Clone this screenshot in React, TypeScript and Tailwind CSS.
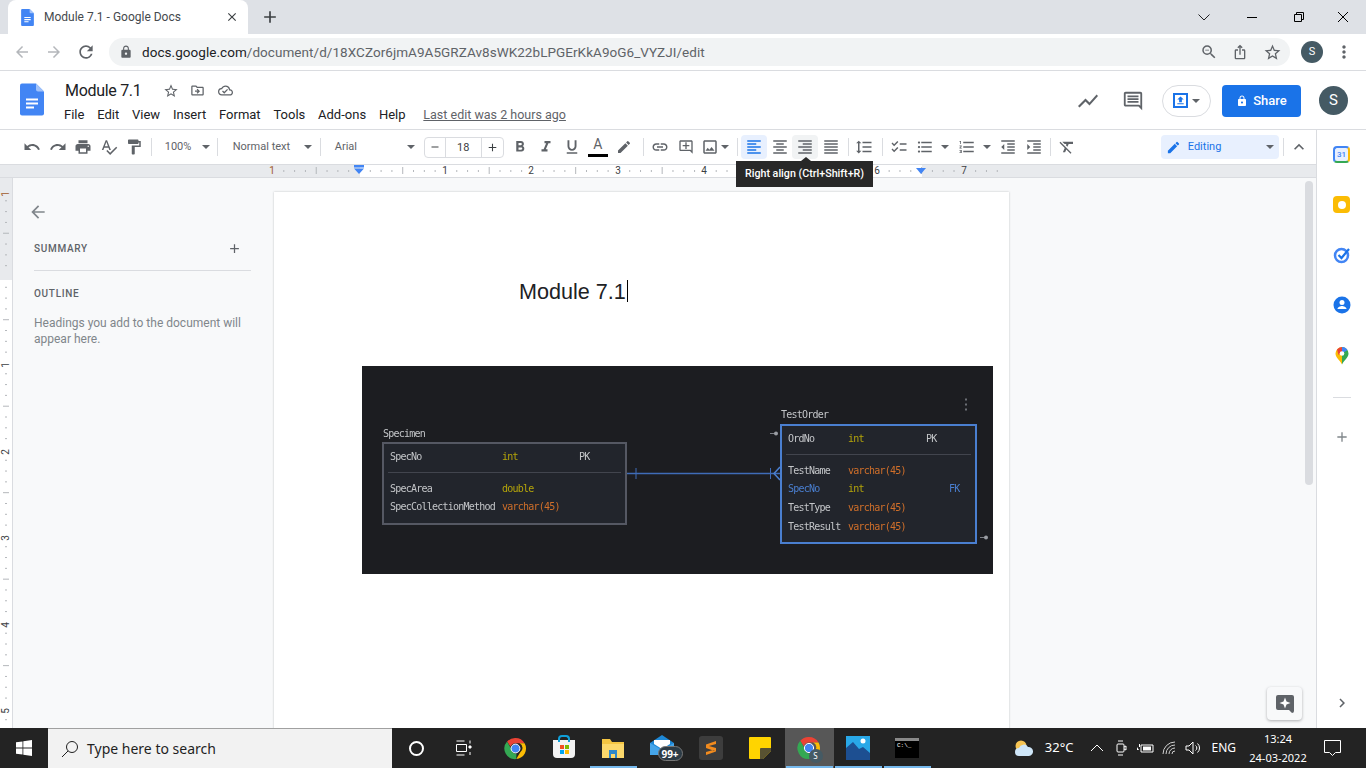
import type { ReactNode } from 'react';
import {
  MdUndo, MdRedo, MdPrint, MdSpellcheck, MdFormatPaint, MdFormatBold, MdFormatItalic, MdFormatUnderlined,
  MdLink, MdOutlineAddComment, MdOutlineImage, MdFormatAlignLeft, MdFormatAlignCenter, MdFormatAlignRight,
  MdFormatAlignJustify, MdFormatLineSpacing, MdChecklist, MdFormatListBulleted, MdFormatListNumbered,
  MdFormatIndentDecrease, MdFormatIndentIncrease, MdFormatClear, MdEdit, MdExpandLess, MdMoreVert, MdArrowBack,
  MdAdd, MdShowChart, MdOutlineInsertComment, MdLock, MdStarBorder, MdOutlineDriveFileMove, MdOutlineCloudDone,
  MdRefresh, MdArrowForward, MdClose, MdZoomOut, MdIosShare, MdChevronRight, MdRemove, MdFileUpload,
} from 'react-icons/md';

function Sep({ className = '' }: { className?: string }) {
  return <div className={`h-[18px] w-px shrink-0 bg-[#dadce0] ${className}`} />;
}

function Caret({ className = '' }: { className?: string }) {
  return <div className={`h-0 w-0 shrink-0 border-x-[4px] border-t-[4px] border-x-transparent border-t-[#5f6368] ${className}`} />;
}

function DocIcon({ w, h }: { w: number; h: number }) {
  return (
    <svg width={w} height={h} viewBox="0 0 24 32">
      <path d="M2 0h14l8 8v22a2 2 0 0 1-2 2H2a2 2 0 0 1-2-2V2a2 2 0 0 1 2-2z" fill="#4285f4" />
      <path d="M16 0l8 8h-6a2 2 0 0 1-2-2z" fill="#a1c2fa" />
      <path d="M6 15h12v2H6zM6 19h12v2H6zM6 23h8v2H6z" fill="#fff" />
    </svg>
  );
}

function ChromeLogo({ size }: { size: number }) {
  return (
    <svg width={size} height={size} viewBox="0 0 24 24">
      <path d="M12 1a11 11 0 0 1 9.5 5.5H12a5.5 5.5 0 0 0-5.2 3.8L3.2 4.8A11 11 0 0 1 12 1z" fill="#ea4335" />
      <path d="M21.5 6.5A11 11 0 0 1 12.8 23l4-6.9a5.5 5.5 0 0 0-.6-9.6z" fill="#fbbc04" />
      <path d="M3.2 4.8l4.4 7.6A5.5 5.5 0 0 0 13 17.4l-.2 5.6A11 11 0 0 1 3.2 4.8z" fill="#34a853" />
      <circle cx="12" cy="12" r="4.6" fill="#4285f4" stroke="#fff" strokeWidth="1" />
    </svg>
  );
}

const inchMarks = [
  { x: 272, label: '1' },
  { x: 445, label: '1' },
  { x: 531, label: '2' },
  { x: 618, label: '3' },
  { x: 704, label: '4' },
  { x: 877, label: '6' },
  { x: 964, label: '7' },
];

function HorizontalRuler() {
  // tick every eighth of an inch, longer at the half inch
  const ticks: { x: number; long: boolean }[] = [];
  for (let i = 0; i < 68; i++) {
    const x = 273 + i * 10.81;
    if (i % 8 === 0) continue;
    ticks.push({ x, long: i % 4 === 0 });
  }
  return (
    <div className="relative h-[13px] shrink-0 border-b border-[#dadce0] bg-[#e8eaed]">
      <div className="absolute left-[360px] top-0 h-[12px] w-[562px] bg-white" />
      <svg className="absolute inset-0" width="1316" height="12">
        {ticks.map((t) => (
          <line key={t.x} x1={t.x} x2={t.x} y1={t.long ? 2 : 5} y2={t.long ? 9 : 7} stroke="#b4b7bb" strokeWidth="1" />
        ))}
        <path d="M354 0h10v2.5h-10zM354 3.5h10l-5 5.5z" fill="#4285f4" />
        <path d="M916 3h10l-5 6z" fill="#4285f4" />
      </svg>
      {inchMarks.map((m, i) => (
        <span
          key={i}
          style={{ left: m.x - 4 }}
          className={`absolute top-0 w-2 text-center text-[10px] leading-[12px] ${i === 0 ? 'text-[#a05a2c]' : 'text-[#3c4043]'}`}
        >
          {m.label}
        </span>
      ))}
    </div>
  );
}

function VerticalRuler() {
  const ticks: { y: number; long: boolean }[] = [];
  for (let i = 0; i < 52; i++) {
    const y = 12 + i * 10.81;
    if (i % 8 === 0) continue;
    ticks.push({ y, long: i % 4 === 0 });
  }
  const labels = [
    { y: 16, text: '1', brown: true },
    { y: 187, text: '1' },
    { y: 274, text: '2' },
    { y: 360, text: '3' },
    { y: 447, text: '4' },
    { y: 533, text: '5' },
  ];
  return (
    <div className="relative w-[13px] shrink-0 border-r border-[#dadce0] bg-white">
      <div className="h-[102px] bg-[#e8eaed]" />
      <svg className="absolute inset-0" width="12" height="550">
        {ticks.map((t) => (
          <line key={t.y} y1={t.y} y2={t.y} x1={t.long ? 3 : 5} x2={t.long ? 9 : 7} stroke="#b4b7bb" strokeWidth="1" />
        ))}
      </svg>
      {labels.map((l) => (
        <span
          key={l.y}
          style={{ top: l.y - 6 }}
          className={`absolute left-0 w-3 -rotate-90 text-center text-[10px] leading-[12px] ${l.brown ? 'text-[#a05a2c]' : 'text-[#3c4043]'}`}
        >
          {l.text}
        </span>
      ))}
    </div>
  );
}

type Cell = { name: string; type: string; key?: string };

const typeColor = (t: string) => (t === 'int' || t === 'double' ? 'text-[#b5a50a]' : 'text-[#d06f2a]');

function TableRow({ row, nameW, typeW }: { row: Cell; nameW: string; typeW: string }) {
  return (
    <div className="flex h-[18.7px] items-center">
      <span className={`${nameW} text-[#c4c6c9]`}>{row.name}</span>
      <span className={`${typeW} ${typeColor(row.type)}`}>{row.type}</span>
      <span className="text-[#c4c6c9]">{row.key}</span>
    </div>
  );
}

function ErDiagram() {
  const mono = "font-['DejaVu_Sans_Mono',monospace] text-[10px] tracking-[-0.77px]";
  return (
    <div className={`relative h-[208px] w-[631px] bg-[#1c1d21] blur-[0.4px] ${mono}`}>
      <span className="absolute left-[21px] top-[60px] text-[#c4c6c9]">Specimen</span>
      <div className="absolute left-[20px] top-[76px] h-[83px] w-[245px] border-2 border-[#555863] bg-[#22252c] pl-[6px] pr-[4px] pt-[3px]">
        <TableRow row={{ name: 'SpecNo', type: 'int', key: 'PK' }} nameW="w-[112px]" typeW="w-[77px]" />
        <div className="my-[6px] ml-[-2px] h-px bg-[#42454e]" />
        <TableRow row={{ name: 'SpecArea', type: 'double' }} nameW="w-[112px]" typeW="w-[77px]" />
        <TableRow row={{ name: 'SpecCollectionMethod', type: 'varchar(45)' }} nameW="w-[112px]" typeW="w-[77px]" />
      </div>

      <span className="absolute left-[419px] top-[41px] text-[#c4c6c9]">TestOrder</span>
      <div className="absolute left-[418px] top-[58px] h-[120px] w-[197px] border-2 border-[#4a7fd0] bg-[#22252c] pl-[6px] pr-[4px] pt-[3px]">
        <TableRow row={{ name: 'OrdNo', type: 'int', key: 'PK' }} nameW="w-[60px]" typeW="w-[78px]" />
        <div className="my-[6px] ml-[-2px] h-px bg-[#42454e]" />
        <TableRow row={{ name: 'TestName', type: 'varchar(45)' }} nameW="w-[60px]" typeW="w-[78px]" />
        <div className="flex h-[18.7px] items-center">
          <span className="w-[60px] text-[#4a7fd0]">SpecNo</span>
          <span className="w-[101px] text-[#b5a50a]">int</span>
          <span className="text-[#4a7fd0]">FK</span>
        </div>
        <TableRow row={{ name: 'TestType', type: 'varchar(45)' }} nameW="w-[60px]" typeW="w-[78px]" />
        <TableRow row={{ name: 'TestResult', type: 'varchar(45)' }} nameW="w-[60px]" typeW="w-[78px]" />
      </div>

      <svg className="absolute inset-0" width="631" height="208">
        <path d="M265 107.5h153" stroke="#3f6cb8" strokeWidth="1.5" fill="none" />
        <path d="M274 102v11M408.5 102v11" stroke="#3f6cb8" strokeWidth="1" />
        <path d="M418 101l-6 6.5l6 6.5" stroke="#4a7fd0" strokeWidth="1.5" fill="none" />
        <path d="M408 67.5h6M618 171.5h6" stroke="#7d8087" strokeWidth="1" />
        <circle cx="414" cy="67.5" r="2" fill="#9a9da3" />
        <circle cx="624" cy="171.5" r="2" fill="#9a9da3" />
        <path d="M604 32.5v2M604 37.5v2M604 42.5v2" stroke="#6b6e75" strokeWidth="2" />
      </svg>
    </div>
  );
}

function TabStrip() {
  return (
    <div className="flex h-[34px] shrink-0 items-end bg-[#dee1e6]">
      <div className="ml-[8px] flex h-[34px] w-[240px] items-center rounded-t-lg bg-white pl-[12px] pr-[9px]">
        <DocIcon w={15} h={17} />
        <span className="ml-[9px] flex-1 whitespace-nowrap text-[12px] text-[#45494d]">Module 7.1 - Google Docs</span>
        <MdClose size={14} className="text-[#3c4043]" />
      </div>
      <div className="ml-[12px] flex h-[34px] items-center">
        <MdAdd size={20} className="text-[#3c4043]" />
      </div>
      <div className="ml-auto flex h-[34px] items-center text-[#202124]">
        <svg width="12" height="7" viewBox="0 0 12 7" className="mr-[37px]">
          <path d="M.5.5L6 6l5.5-5.5" fill="none" stroke="#202124" />
        </svg>
        <div className="mr-[37px] h-px w-2.5 bg-black" />
        <svg width="10" height="10" viewBox="0 0 10 10" className="mr-[33px]">
          <path d="M.5 2.5h7v7h-7zM2.5 2.5v-2h7v7h-2" fill="none" stroke="#000" />
        </svg>
        <svg width="12" height="12" viewBox="0 0 12 12" className="mr-[17px]">
          <path d="M1 1l10 10M11 1L1 11" stroke="#000" />
        </svg>
      </div>
    </div>
  );
}

function AddressBar() {
  return (
    <div className="flex h-[37px] shrink-0 items-center border-b border-[#dadce0] bg-white">
      <MdArrowBack size={18} className="ml-[13px] text-[#b4b7bb]" />
      <MdArrowForward size={18} className="ml-[14px] text-[#b4b7bb]" />
      <MdRefresh size={20} className="ml-[13px] text-[#5f6368]" />
      <div className="ml-[13px] flex h-[28px] w-[1181px] items-center rounded-full bg-[#f1f3f4] pl-[10px] pr-[8px]">
        <MdLock size={14} className="text-[#5f6368]" />
        <span className="ml-[9px] whitespace-nowrap text-[13.5px] tracking-[0.05px] text-[#5f6368]">
          <span className="text-[#202124]">docs.google.com</span>/document/d/18XCZor6jmA9A5GRZAv8sWK22bLPGErKkA9oG6_VYZJI/edit
        </span>
        <MdZoomOut size={18} className="ml-auto text-[#5f6368]" />
        <MdIosShare size={16} className="ml-[14px] text-[#5f6368]" />
        <MdStarBorder size={19} className="ml-[15px] text-[#5f6368]" />
      </div>
      <div className="ml-[11px] flex h-[22px] w-[22px] items-center justify-center rounded-full bg-[#455a64] text-[11px] text-white">S</div>
      <MdMoreVert size={20} className="ml-[11px] text-[#5f6368]" />
    </div>
  );
}

function DocHeader() {
  const menu = ['File', 'Edit', 'View', 'Insert', 'Format', 'Tools', 'Add-ons', 'Help'];
  return (
    <div className="flex h-[59px] shrink-0 border-b border-[#dadce0] bg-white">
      <div className="ml-[20px] mt-[12px]">
        <DocIcon w={24} h={33} />
      </div>
      <div className="ml-[20px] flex flex-col">
        <div className="mt-[9px] flex h-[21px] items-center">
          <span className="ml-[1px] whitespace-nowrap text-[16px] tracking-[-0.3px] text-[#202124]">Module 7.1</span>
          <MdStarBorder size={16} className="ml-[21px] text-[#5f6368]" />
          <MdOutlineDriveFileMove size={15} className="ml-[11px] text-[#5f6368]" />
          <MdOutlineCloudDone size={15} className="ml-[13px] text-[#5f6368]" />
        </div>
        <div className="mt-[4px] flex items-center gap-[12.8px] whitespace-nowrap text-[13px] leading-[20px] text-[#202124]">
          {menu.map((m) => (
            <span key={m}>{m}</span>
          ))}
          <span className="ml-[5px] text-[12.5px] text-[#5f6368] underline">Last edit was 2 hours ago</span>
        </div>
      </div>
      <div className="ml-auto flex items-center pt-[1px]">
        <MdShowChart size={24} className="text-[#5f6368]" />
        <MdOutlineInsertComment size={22} className="ml-[22px] text-[#5f6368]" />
        <div className="ml-[18px] flex h-[32px] w-[49px] items-center justify-center rounded-full border border-[#dadce0]">
          <div className="flex h-[15px] w-[15px] items-center justify-center border-2 border-[#1a73e8]">
            <MdFileUpload size={11} className="text-[#1a73e8]" />
          </div>
          <Caret className="ml-[4px] border-t-[#1a73e8]" />
        </div>
        <div className="ml-[11px] flex h-[32px] w-[79px] items-center justify-center rounded bg-[#1a73e8] text-[13px] font-medium text-white">
          <MdLock size={12} />
          <span className="ml-[5px]">Share</span>
        </div>
        <div className="ml-[18px] mr-[18px] flex h-[29px] w-[29px] items-center justify-center rounded-full bg-[#455a64] text-[15px] text-white">S</div>
      </div>
    </div>
  );
}

function Btn({ icon: Icon, tone = '', width = 'w-[26px]', className = '', size = 18 }: { icon: typeof MdUndo; tone?: string; width?: string; className?: string; size?: number }) {
  return (
    <div className={`flex h-[24px] shrink-0 items-center justify-center rounded-sm ${width} ${tone || 'text-[#5f6368]'} ${className}`}>
      <Icon size={size} />
    </div>
  );
}

function FormatToolbar() {
  const narrow = 'w-[25.5px]';
  return (
    <div className="relative flex h-[35px] shrink-0 items-center border-b border-[#dadce0] bg-white pl-[19.25px] text-[#5f6368]">
      <Btn icon={MdUndo} width={narrow} />
      <Btn icon={MdRedo} width={narrow} />
      <Btn icon={MdPrint} width={narrow} />
      <Btn icon={MdSpellcheck} width={narrow} />
      <Btn icon={MdFormatPaint} width={narrow} />
      <Sep className="ml-[4px]" />
      <div className="ml-[4px] flex w-[54px] items-center justify-between pl-[9px] text-[11px]">
        <span>100%</span>
        <Caret />
      </div>
      <Sep className="ml-[7px]" />
      <div className="flex w-[94px] items-center justify-between pl-[15px] text-[11px]">
        <span>Normal text</span>
        <Caret />
      </div>
      <Sep className="ml-[8px]" />
      <div className="flex w-[94px] items-center justify-between pl-[14px] text-[11px]">
        <span>Arial</span>
        <Caret />
      </div>
      <div className="ml-[9px] flex h-[21px] w-[80px] shrink-0 items-center rounded-sm border border-[#dadce0] text-[#3c4043]">
        <div className="flex w-[20px] justify-center"><MdRemove size={12} /></div>
        <div className="h-full w-[37px] border-x border-[#dadce0] text-center text-[11px] leading-[19px]">18</div>
        <div className="flex flex-1 justify-center"><MdAdd size={13} /></div>
      </div>
      <Btn icon={MdFormatBold} className="ml-[3px]" />
      <Btn icon={MdFormatItalic} />
      <Btn icon={MdFormatUnderlined} />
      <div className="flex h-[24px] w-[26px] shrink-0 flex-col items-center justify-center">
        <span className="text-[14px] leading-[15px]">A</span>
        <div className="mt-[2px] h-[3px] w-[20px] bg-black" />
      </div>
      <Btn icon={MdEdit} size={16} />
      <Sep className="ml-[6px]" />
      <Btn icon={MdLink} className="ml-[3px]" />
      <Btn icon={MdOutlineAddComment} size={16} />
      <Btn icon={MdOutlineImage} width="w-[22px]" />
      <Caret />
      <Sep className="ml-[8px]" />
      <Btn icon={MdFormatAlignLeft} width={narrow} tone="bg-[#e8f0fe] text-[#1a73e8]" className="ml-[3.5px]" />
      <Btn icon={MdFormatAlignCenter} width={narrow} />
      <Btn icon={MdFormatAlignRight} width={narrow} tone="bg-[#f1f3f4] text-[#5f6368]" />
      <Btn icon={MdFormatAlignJustify} width={narrow} />
      <Sep className="ml-[4.5px]" />
      <Btn icon={MdFormatLineSpacing} width={narrow} className="ml-[2.5px]" />
      <Sep className="ml-[5px]" />
      <Btn icon={MdChecklist} className="ml-[3px]" />
      <Btn icon={MdFormatListBulleted} />
      <Caret className="ml-[3px]" />
      <Btn icon={MdFormatListNumbered} className="ml-[5px]" />
      <Caret className="ml-[3px]" />
      <Btn icon={MdFormatIndentDecrease} className="ml-[4px]" />
      <Btn icon={MdFormatIndentIncrease} />
      <Sep className="ml-[3px]" />
      <Btn icon={MdFormatClear} className="ml-[3px]" />
      <div className="ml-[81px] flex h-[24px] w-[118px] shrink-0 items-center rounded bg-[#e8f0fe] pl-[5px] pr-[5px] text-[#1a73e8]">
        <MdEdit size={15} />
        <span className="ml-[7px] text-[11px]">Editing</span>
        <Caret className="ml-auto border-t-[#1a73e8]" />
      </div>
      <Sep className="ml-[4px]" />
      <MdExpandLess size={20} className="ml-[5px] shrink-0 text-[#5f6368]" />

      <div className="absolute left-[736px] top-[31px] z-10 flex h-[26px] w-[137px] items-center justify-center whitespace-nowrap bg-[#282828] text-[10.7px] font-medium text-white">
        Right align (Ctrl+Shift+R)
      </div>
      <div className="absolute left-[801px] top-[27px] z-10 h-0 w-0 border-x-[5px] border-b-[4px] border-x-transparent border-b-[#282828]" />
    </div>
  );
}

function Sidebar() {
  return (
    <div className="w-[261px] shrink-0 pl-[21px] pt-[24px]">
      <MdArrowBack size={20} className="-ml-[6px] text-[#80868b]" />
      <div className="mt-[19px] flex w-[217px] items-center justify-between border-b border-[#dadce0] pb-[14px] pr-[9px]">
        <span className="text-[10px] font-medium tracking-[0.7px] text-[#5f6368]">SUMMARY</span>
        <MdAdd size={15} className="text-[#5f6368]" />
      </div>
      <div className="mt-[15px] text-[10px] font-medium tracking-[0.7px] text-[#5f6368]">OUTLINE</div>
      <p className="mt-[14px] w-[217px] text-[12px] leading-[16px] text-[#80868b]">
        Headings you add to the document will appear here.
      </p>
    </div>
  );
}

function DocPage() {
  return (
    <div className="mt-[14px] h-[560px] w-[735px] shrink-0 bg-white shadow-[0_0_2px_rgba(60,64,67,0.3)]">
      <div className="flex h-[174px] pl-[245px] pt-[87px]">
        <span className="h-[26px] whitespace-nowrap font-['Liberation_Sans',sans-serif] text-[21.6px] leading-[26px] text-[#202124]">Module 7.1</span>
        <div className="ml-[1px] mt-[1px] h-[22px] w-px bg-black" />
      </div>
      <div className="pl-[88px]">
        <ErDiagram />
      </div>
    </div>
  );
}

function Addons() {
  return (
    <div className="flex w-[50px] shrink-0 flex-col items-center border-l border-[#dadce0] bg-white pt-[16px]">
      <div className="flex h-[17px] w-[17px] items-center justify-center rounded-sm border-[2.5px] border-[#4285f4] border-b-[#34a853] border-r-[#fbbc04] bg-[#e8f0fe] text-[8px] font-medium text-[#4285f4]">31</div>
      <div className="mt-[33px] flex h-[17px] w-[17px] items-center justify-center rounded-sm bg-[#fbbc04]">
        <div className="h-[8px] w-[8px] rounded-full bg-white" />
      </div>
      <svg width="18" height="18" viewBox="0 0 18 18" className="mt-[33px]">
        <circle cx="8.5" cy="9.5" r="6.5" fill="none" stroke="#4285f4" strokeWidth="2.5" />
        <path d="M5.5 9l3 3L16 3" fill="none" stroke="#1a73e8" strokeWidth="2.2" />
      </svg>
      <svg width="18" height="18" viewBox="0 0 18 18" className="mt-[32px]">
        <circle cx="9" cy="9" r="8.5" fill="#1a73e8" />
        <circle cx="9" cy="6.5" r="2.5" fill="#fff" />
        <path d="M4.5 13c0-2 3-3 4.5-3s4.5 1 4.5 3z" fill="#fff" />
      </svg>
      <svg width="14" height="18" viewBox="0 0 14 18" className="mt-[33px]">
        <path d="M7 0a6.5 6.5 0 0 1 6.5 6.5c0 4-4 6-6.5 11z" fill="#34a853" />
        <path d="M7 0A6.5 6.5 0 0 0 .5 6.5c0 4 4 6 6.5 11z" fill="#fbbc04" />
        <path d="M2 2.5A6.5 6.5 0 0 1 7 0v4.5L3.5 8z" fill="#ea4335" />
        <path d="M7 0a6.5 6.5 0 0 1 5.5 3L7 6.5z" fill="#4285f4" />
        <circle cx="7" cy="6.5" r="2.3" fill="#fff" />
      </svg>
      <div className="mt-[32px] h-px w-[18px] bg-[#dadce0]" />
      <MdAdd size={16} className="mt-[31px] text-[#80868b]" />
      <MdChevronRight size={18} className="mt-auto mb-[16px] text-[#5f6368]" />
    </div>
  );
}

function TaskIcon({ children, active, underline, w = 49 }: { children?: ReactNode; active?: boolean; underline?: boolean; w?: number }) {
  return (
    <div className={`relative flex h-[40px] shrink-0 items-center justify-center ${active ? 'bg-[#575757]' : ''}`} style={{ width: w }}>
      {children}
      {underline && <div className="absolute inset-x-[1px] bottom-0 h-[2px] bg-[#76b9ed]" />}
    </div>
  );
}

function Taskbar() {
  return (
    <div className="flex h-[40px] shrink-0 items-center bg-[#232323] font-['Noto_Sans',sans-serif] text-white">
      <div className="flex h-full w-[48px] shrink-0 items-center justify-center">
        <svg width="16" height="16" viewBox="0 0 16 16">
          <path d="M0 2.3l6.5-.9v6.2H0zM7.3 1.3L16 0v7.600H7.3zM0 8.400h6.500v6.200L0 13.700zM7.300 8.400H16V16l-8.700-1.200z" fill="#fff" />
        </svg>
      </div>
      <div className="flex h-full w-[344px] shrink-0 items-center border-t border-[#a0a0a0] bg-[#f2f2f2] pl-[13px] text-[#1f1f1f]">
        <svg width="18" height="18" viewBox="0 0 18 18">
          <circle cx="11" cy="7" r="5.5" fill="none" stroke="#1f1f1f" />
          <path d="M7 11l-6 6" stroke="#1f1f1f" />
        </svg>
        <span className="ml-[8px] text-[14px]">Type here to search</span>
      </div>
      <TaskIcon w={48}>
        <div className="h-[15px] w-[15px] rounded-full border-2 border-white" />
      </TaskIcon>
      <TaskIcon w={48}>
        <svg width="16" height="16" viewBox="0 0 16 16" fill="none" stroke="#fff">
          <path d="M.5 1h8M.5 15h8M.5 4.5h10v7H.5zM14 .5v3M14 12v3" />
          <path d="M13 6h2v2h-2z" fill="#fff" />
        </svg>
      </TaskIcon>
      <div className="w-[2.5px] shrink-0" />
      <TaskIcon><ChromeLogo size={23} /></TaskIcon>
      <TaskIcon>
        <div className="relative mt-[2px] flex h-[18px] w-[22px] items-center justify-center rounded-b-sm bg-[#f3f3f3]">
          <div className="absolute -top-[5px] left-[5px] h-[7px] w-[12px] rounded-t border-2 border-b-0 border-[#0f9fd8]" />
          <div className="grid grid-cols-2 gap-px">
            <div className="h-[4px] w-[4px] bg-[#f25022]" />
            <div className="h-[4px] w-[4px] bg-[#7fba00]" />
            <div className="h-[4px] w-[4px] bg-[#00a4ef]" />
            <div className="h-[4px] w-[4px] bg-[#ffb900]" />
          </div>
        </div>
      </TaskIcon>
      <TaskIcon underline>
        <svg width="22" height="20" viewBox="0 0 22 20">
          <path d="M0 1h8l2 3h12v16H0z" fill="#f4c542" />
          <path d="M0 6h22v14H0z" fill="#fcd86b" />
          <path d="M7 12h8v8H7z" fill="#2f88c9" />
          <path d="M9 16h4v4H9z" fill="#fcd86b" />
        </svg>
      </TaskIcon>
      <TaskIcon>
        <svg width="24" height="22" viewBox="0 0 24 20" className="mb-[6px]">
          <path d="M0 8l12-8 12 8v12H0z" fill="#1e88d6" />
          <path d="M4 9V5h16v4l-8 5z" fill="#fff" />
          <path d="M0 8l12 7 12-7v12H0z" fill="#45a5ea" />
        </svg>
        <div className="absolute left-[20px] top-[18px] flex h-[15px] w-[25px] items-center justify-center rounded-full border border-[#777] bg-[#2c3b46] text-[10px] font-bold leading-none text-white">99+</div>
      </TaskIcon>
      <TaskIcon>
        <div className="flex h-[24px] w-[24px] items-center justify-center rounded-[3px] bg-[#3d3d3d]">
          <svg width="12" height="16" viewBox="0 0 12 16">
            <path d="M11 1L1 4.5V8l10 3.500V8L4 6l7-2zM1 12l7-2 3 1.500L1 15z" fill="#f28b1e" />
          </svg>
        </div>
      </TaskIcon>
      <TaskIcon>
        <svg width="22" height="22" viewBox="0 0 22 22">
          <path d="M1 0h20a1 1 0 0 1 1 1v13l-8 8H1a1 1 0 0 1-1-1V1a1 1 0 0 1 1-1z" fill="#ffd400" />
          <path d="M22 11v3l-8 8h-3V12a1 1 0 0 1 1-1z" fill="#3b3b3b" opacity=".85" />
        </svg>
      </TaskIcon>
      <TaskIcon active underline>
        <ChromeLogo size={24} />
        <div className="absolute left-[24px] top-[21px] flex h-[14px] w-[14px] items-center justify-center rounded-full bg-[#455a64] text-[8px] text-white">S</div>
      </TaskIcon>
      <TaskIcon underline>
        <svg width="24" height="24" viewBox="0 0 24 24">
          <path d="M0 0h24v24H0z" fill="#29a8e8" />
          <path d="M0 24V12l7-6 6 7 4-2 7 6v7z" fill="#1d4f91" />
          <circle cx="17" cy="5" r="2.5" fill="#fff" />
        </svg>
      </TaskIcon>
      <TaskIcon underline>
        <div className="h-[20px] w-[24px] border-t-[3px] border-[#8a8a8a] bg-black pl-[2px] pt-[1px] font-['Liberation_Mono',monospace] text-[6px] leading-[7px] text-white">C:\_</div>
      </TaskIcon>
      <div className="ml-auto flex h-full items-center whitespace-nowrap pr-[24px] text-white">
        <svg width="19" height="17" viewBox="0 0 19 17">
          <circle cx="7" cy="6" r="5.5" fill="#f6c453" />
          <path d="M5 16a4 4 0 0 1 0-8 5 5 0 0 1 9-1 4.5 4.5 0 0 1 1 9z" fill="#cfe6f8" />
        </svg>
        <span className="ml-[12px] text-[13px]">32°C</span>
        <svg width="14" height="8" viewBox="0 0 14 8" className="ml-[17px]"><path d="M1 7l6-6 6 6" fill="none" stroke="#fff" /></svg>
        <svg width="12" height="18" viewBox="0 0 12 18" fill="none" stroke="#fff" className="ml-[11px]">
          <path d="M2 6a1 1 0 0 1 1-1h5a1 1 0 0 1 1 1v6a1 1 0 0 1-1 1H3a1 1 0 0 1-1-1zM9 8l2-1v4l-2-1M3 2h5M3 16h5" />
        </svg>
        <svg width="18" height="12" viewBox="0 0 18 12" className="ml-[9px]">
          <path d="M5 3h12v7H5z" fill="none" stroke="#fff" />
          <path d="M7 4.5h8v4H7zM0 5h3V2h1v3M1 5v3h2" fill="#fff" />
        </svg>
        <svg width="16" height="14" viewBox="0 0 16 14" fill="none" stroke="#d0d0d0" className="ml-[8px]">
          <path d="M1 13A12 12 0 0 1 13 1M4 13a9 9 0 0 1 9-9M7 13a6 6 0 0 1 6-6M10 13a3 3 0 0 1 3-3" />
        </svg>
        <svg width="15" height="14" viewBox="0 0 15 14" fill="none" stroke="#fff" className="ml-[7px]">
          <path d="M1 5h3l4-4v12l-4-4H1zM10.5 4.5a3 3 0 0 1 0 5M12.5 2.5a6 6 0 0 1 0 9" />
        </svg>
        <span className="ml-[11px] text-[12px]">ENG</span>
        <div className="ml-[11px] flex w-[62px] flex-col items-center text-[11px] leading-[19px]">
          <span>13:24</span>
          <span>24-03-2022</span>
        </div>
        <svg width="18" height="17" viewBox="0 0 18 17" className="ml-[15px]" fill="none" stroke="#fff">
          <path d="M.5.5h16v12h-5l-3 3-3-3h-5z" />
        </svg>
      </div>
    </div>
  );
}

export default function App() {
  return (
    <div className="flex h-[768px] w-[1366px] flex-col overflow-hidden bg-white font-['Roboto',sans-serif]">
      <TabStrip />
      <AddressBar />
      <DocHeader />
      <div className="flex min-h-0 flex-1">
        <div className="flex min-w-0 flex-1 flex-col">
          <FormatToolbar />
          <HorizontalRuler />
          <div className="relative flex min-h-0 flex-1 overflow-hidden bg-[#f8f9fa]">
            <VerticalRuler />
            <Sidebar />
            <DocPage />
            <div className="absolute left-[1305px] top-[3px] h-[304px] w-[8px] rounded-full bg-[#dadce0]" />
            <div className="absolute bottom-[8px] left-[1267px] flex h-[33px] w-[35px] items-center justify-center rounded-sm bg-[#f8f9fa] shadow-[0_1px_3px_rgba(60,64,67,0.4)]">
              <svg width="18" height="18" viewBox="0 0 18 18">
                <path d="M2 0h14a2 2 0 0 1 2 2v14a2 2 0 0 1-2 2l-3-3H2a2 2 0 0 1-2-2V2a2 2 0 0 1 2-2z" fill="#5f6368" />
                <path d="M9 2.5l1.5 4 4 1.5-4 1.500L9 13.500l-1.500-4-4-1.500 4-1.500z" fill="#fff" />
              </svg>
            </div>
          </div>
        </div>
        <Addons />
      </div>
      <Taskbar />
    </div>
  );
}
